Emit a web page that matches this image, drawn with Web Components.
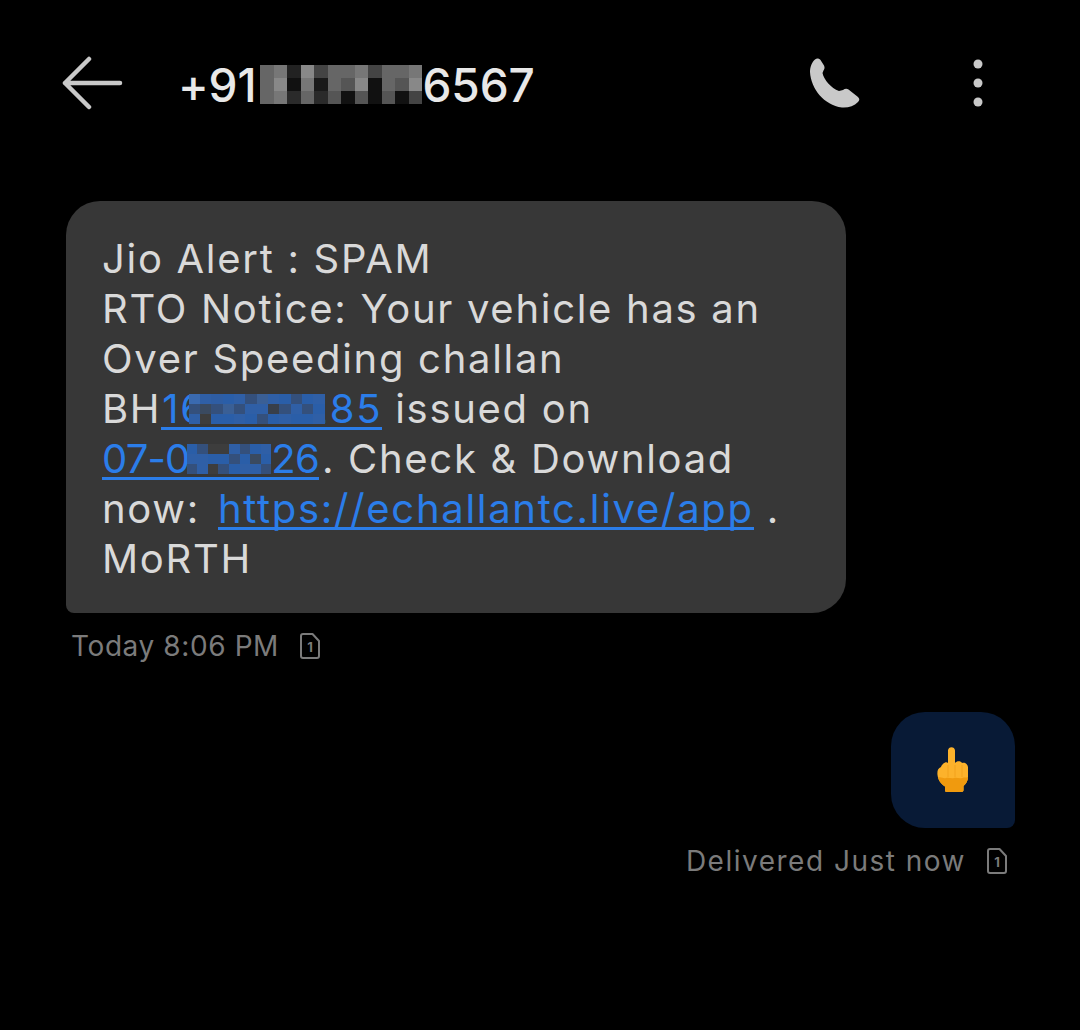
<!DOCTYPE html>
<html>
<head>
<meta charset="utf-8">
<title>Messages</title>
<style>
html, body { margin: 0; padding: 0; background: #000; }
body { width: 1080px; height: 1030px; overflow: hidden; font-family: Inter, "Noto Sans", sans-serif; }
</style>
</head>
<body>
<sms-screen>
  <sms-header slot="header">+91<pixel-blur cell="13.500" tall="13" drop="2" style="margin-left:4px" data="666 777 222 888 444 666 666 777 444 666 666 777|666 888 111 777 1a1a1a 666 555 888 111 666 555 888|666 777 2a2a2a 666 2a2a2a 555 111 555 111 555 111 444"></pixel-blur>6567</sms-header>

  <sms-bubble>Jio Alert : SPAM<br>RTO Notice: Your vehicle has an<br>Over Speeding challan<br>BH<sms-link><span style="margin-left:-12px">16</span><pixel-blur cell="11.330" tall="10" drop="1" style="margin-left:-18px;margin-right:-21px" data="3a6ab0 2f5fa6 2e5da3 2a5ea8 2f5fa6 34507c 3a5f95 2f5fa6 2a5ea8 34507c 2a5ea8 2f5fa6|34507c 3a4a60 34507c 3a5f95 34507c 2f5fa6 2f5fa6 383f4a 34507c 2f5fa6 34507c 2a5ea8|2f5fa6 3d3d3d 2a5ea8 2a5ea8 2f5fa6 2a5ea8 34507c 2a5ea8 2f5fa6 2a5ea8 2a5ea8 2f5fa6"></pixel-blur>285</sms-link> issued on<br><sms-link style="letter-spacing:-.8px;margin-right:3px">07-0<pixel-blur cell="10.600" tall="10" drop="1" style="margin-left:-3px" data="2a5ea8 34507c 3d3d3d 3d3d3d 2f5fa6 34507c 2a5ea8 2f5fa6|2f5fa6 2f5fa6 2a5ea8 2a5ea8 34507c 2a5ea8 3a4a60 2a5ea8|34507c 2f5fa6 3d3d3d 34507c 2a5ea8 2f5fa6 2f5fa6 34507c"></pixel-blur>26</sms-link>. Check &amp; Download<br>now: <sms-link style="margin-left:5px">https://echallantc.live/app</sms-link> .<br>MoRTH</sms-bubble>

  <sms-meta>Today 8:06 PM</sms-meta>

  <sms-bubble sent>
    <svg width="32" height="46" viewBox="0 0 32 46" aria-hidden="true">
      <defs><clipPath id="low"><path d="M0 31c4-2 6 1 9 0s5 1 8 0 5 1 8 0 4 0 7-1V46H0z"/></clipPath></defs>
      <path d="M11 16V3.500C11-1 18-1 18 3.500V16C20 13.500 24 14 25 16C28 15 30.500 17 31 20V30C31 34 29 37 26.500 39V43C26.500 44.500 25.500 45 24 45H10C8.500 45 8 44.500 8 43V39.500C4 37 1 33 .5 28C0 24 1 21 4 20C5 17 9 14 11 16Z" fill="#fcb22b"/>
      <path d="M11 16V3.500C11-1 18-1 18 3.500V16C20 13.500 24 14 25 16C28 15 30.500 17 31 20V30C31 34 29 37 26.500 39V43C26.500 44.500 25.500 45 24 45H10C8.500 45 8 44.500 8 43V39.500C4 37 1 33 .5 28C0 24 1 21 4 20C5 17 9 14 11 16Z" fill="#f09a0e" clip-path="url(#low)"/>
      <path d="M11 18v12M18 18v12M25 18v12" stroke="#f0a01a" stroke-width=".8" fill="none"/>
    </svg>
  </sms-bubble>

  <sms-meta sent>Delivered Just now</sms-meta>
</sms-screen>

<script>
class SmsScreen extends HTMLElement {
    constructor() {
        super();
        this.shadowDOM = this.attachShadow({mode: "open"});
        this.shadowDOM.innerHTML = `
        <style>
        :host { display: block; background: #000; min-height: 1030px; }
        .list {
            display: flex;
            flex-direction: column;
            padding: 31px 65px 0 66px;
        }
        </style>
        <slot name="header"></slot>
        <div class="list"><slot></slot></div>`;
    }
}

class SmsHeader extends HTMLElement {
    constructor() {
        super();
        this.shadowDOM = this.attachShadow({mode: "open"});
        this.shadowDOM.innerHTML = `
        <style>
        :host {
            display: flex;
            align-items: center;
            height: 170px;
            padding: 0 97px 0 62px;
            color: #e8e8e8;
        }
        .title {
            margin-left: 54px;
            font: 500 46px/60px Inter, sans-serif;
            letter-spacing: -.1px;
            white-space: nowrap;
            flex: 1;
        }
        svg { display: block; flex: none; margin-bottom: 4px; }
        .call { margin-right: 113px; }
        </style>
        <svg width="62" height="54" viewBox="0 0 62 54" fill="none" stroke="#c9c9c9" stroke-width="4.500" stroke-linecap="round" stroke-linejoin="round">
            <path d="M58 27H3M27 3L3 27l24 24"/>
        </svg>
        <div class="title"><slot></slot></div>
        <svg class="call" width="50" height="50" viewBox="0 0 50 50">
            <path fill="#c9c9c9" d="M5 1.500C7 0 9 .5 10.500 2L14 7.500C15 9.500 14.500 11 13.500 12.500L12.500 15C14 22 21 30 29 33L33 32C35 30.500 37 30.500 38.500 31.500L48 39C50 41 49.500 42.500 48 44C44 48 38 50 32 49.500C14 47 1 31 0 14C0 9 2 4 5 1.500Z"/>
        </svg>
        <svg width="10" height="48" viewBox="0 0 10 48" fill="#c9c9c9">
            <circle cx="5" cy="5" r="4.500"/><circle cx="5" cy="24" r="4.500"/><circle cx="5" cy="43" r="4.500"/>
        </svg>`;
    }
}

class SmsBubble extends HTMLElement {
    constructor() {
        super();
        this.shadowDOM = this.attachShadow({mode: "open"});
        this.shadowDOM.innerHTML = `
        <style>
        :host {
            display: block;
            box-sizing: border-box;
            width: 780px;
            height: 412px;
            padding: 33px 20px 0 36px;
            background: #373737;
            color: #d9d9d9;
            border-radius: 34px 34px 34px 8px;
            font: 400 40px/50px Inter, sans-serif;
            letter-spacing: 1.7px;
            white-space: nowrap;
        }
        :host([sent]) {
            display: flex;
            align-items: center;
            justify-content: center;
            align-self: flex-end;
            width: 124px;
            height: 116px;
            padding: 0;
            background: #081a36;
            border-radius: 34px 34px 8px 34px;
        }
        </style>
        <slot></slot>`;
    }
}

class SmsLink extends HTMLElement {
    constructor() {
        super();
        this.shadowDOM = this.attachShadow({mode: "open"});
        this.shadowDOM.innerHTML = `
        <style>
        :host {
            color: #2b7de9;
            background: linear-gradient(#2b7de9, #2b7de9) 0 calc(100% - 3px) / 100% 3px no-repeat;
        }
        </style>
        <slot></slot>`;
    }
}

class PixelBlur extends HTMLElement {
    constructor() {
        super();
        this.shadowDOM = this.attachShadow({mode: "open"});
    }
    connectedCallback() {
        const cell = parseFloat(this.getAttribute("cell"));
        const tall = parseFloat(this.getAttribute("tall"));
        const drop = this.getAttribute("drop");
        const rows = this.getAttribute("data").split("|").map(r => r.split(" "));
        const cells = rows.flat().map(c => `<i style="background:#${c}"></i>`).join("");
        this.shadowDOM.innerHTML = `
        <style>
        :host { display: inline-block; position: relative; overflow: hidden; vertical-align: -${drop}px; line-height: 0; }
        .grid {
            display: grid;
            grid-template-columns: repeat(${rows[0].length}, ${cell}px);
            grid-auto-rows: ${tall}px;
        }
        </style>
        <div class="grid">${cells}</div>`;
    }
}

class SmsMeta extends HTMLElement {
    constructor() {
        super();
        this.shadowDOM = this.attachShadow({mode: "open"});
        this.shadowDOM.innerHTML = `
        <style>
        :host {
            display: flex;
            align-items: center;
            gap: 21px;
            height: 40px;
            margin: 13px 0 46px 5px;
            color: #7b7b7b;
            font: 400 28px/40px Inter, sans-serif;
            letter-spacing: .6px;
        }
        :host([sent]) { align-self: flex-end; margin: 13px 8px 0 0; letter-spacing: 1.5px; }
        svg { display: block; }
        text { font: 700 13px Inter, sans-serif; letter-spacing: 0; }
        </style>
        <span><slot></slot></span>
        <svg width="20" height="26" viewBox="0 0 20 26" fill="none" stroke="#7b7b7b" stroke-width="2" stroke-linejoin="round">
            <path d="M3 1h9.500l6.500 7v15a2 2 0 0 1-2 2H3a2 2 0 0 1-2-2V3a2 2 0 0 1 2-2z"/>
            <text x="10" y="19" text-anchor="middle" fill="#7b7b7b" stroke="none">1</text>
        </svg>`;
    }
}

customElements.define("sms-screen", SmsScreen);
customElements.define("sms-header", SmsHeader);
customElements.define("sms-bubble", SmsBubble);
customElements.define("sms-link", SmsLink);
customElements.define("pixel-blur", PixelBlur);
customElements.define("sms-meta", SmsMeta);
</script>
</body>
</html>
